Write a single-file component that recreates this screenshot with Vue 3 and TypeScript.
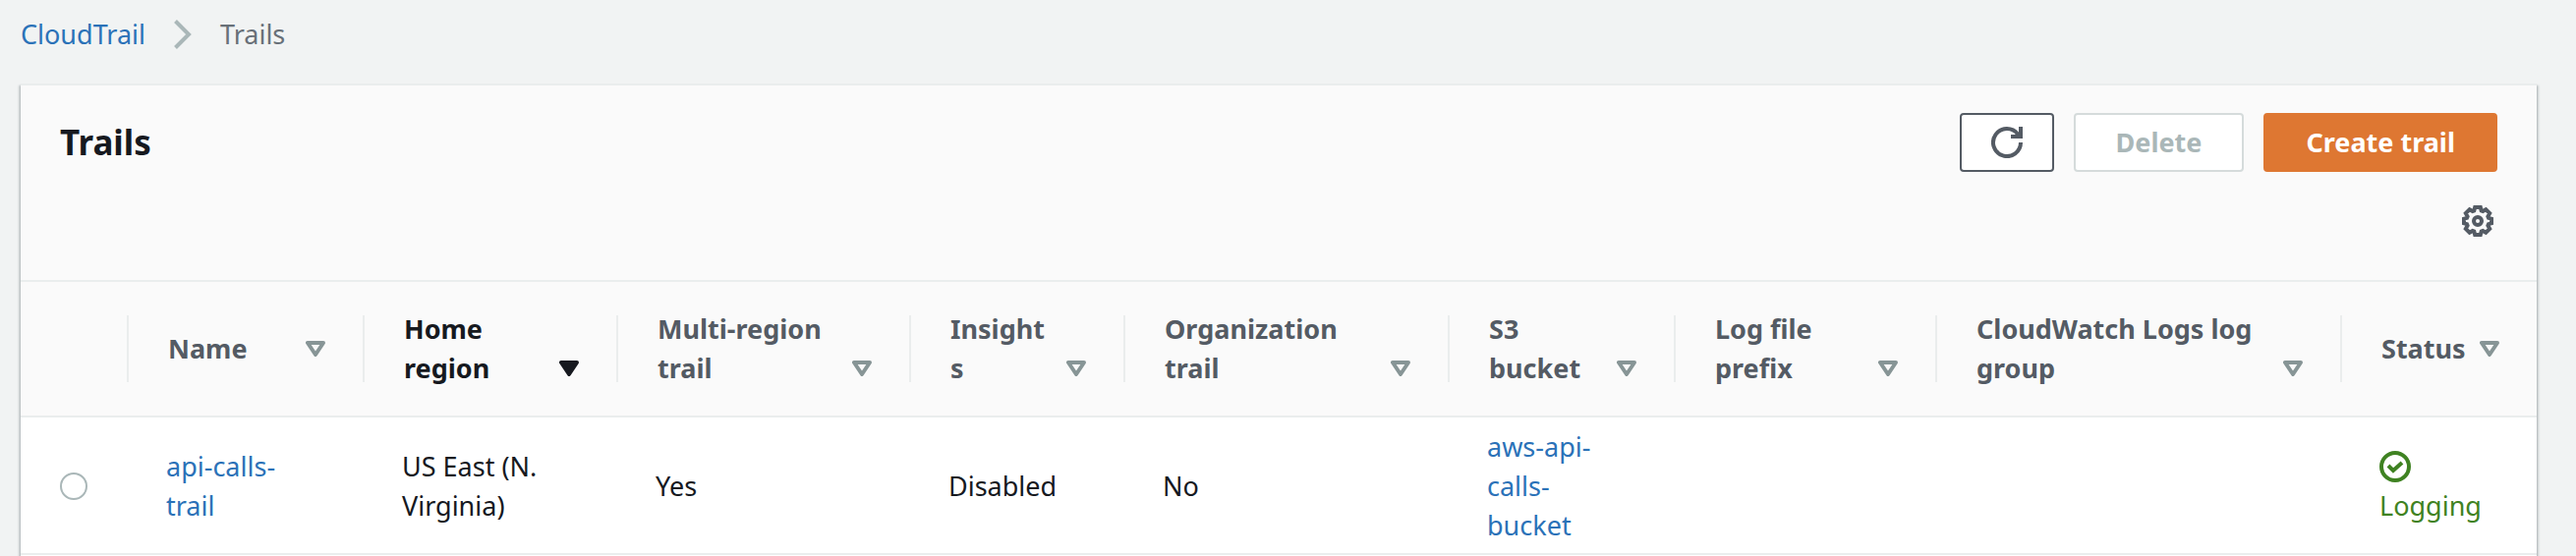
<script setup lang="ts">
import { computed, ref } from 'vue'

interface Column {
  key: string
  label: string
  weight: number
  sorted?: boolean
}

interface Trail {
  name: string
  region: string
  multiRegion: string
  insights: string
  organization: string
  bucket: string
  prefix: string
  logGroup: string
  status: string
}

const selectWeight = 110

const columns: Column[] = [
  { key: 'name', label: 'Name', weight: 240 },
  { key: 'region', label: 'Home region', weight: 258, sorted: true },
  { key: 'multiRegion', label: 'Multi-region trail', weight: 298 },
  { key: 'insights', label: 'Insights', weight: 218 },
  { key: 'organization', label: 'Organization trail', weight: 330 },
  { key: 'bucket', label: 'S3 bucket', weight: 230 },
  { key: 'prefix', label: 'Log file prefix', weight: 266 },
  { key: 'logGroup', label: 'CloudWatch Logs log group', weight: 412 },
  { key: 'status', label: 'Status', weight: 198 },
]

const trails: Trail[] = [
  {
    name: 'api-calls-trail',
    region: 'US East (N. Virginia)',
    multiRegion: 'Yes',
    insights: 'Disabled',
    organization: 'No',
    bucket: 'aws-api-calls-bucket',
    prefix: '',
    logGroup: '',
    status: 'Logging',
  },
]

const selected = ref('')

const widths = computed(() => {
  const all = [selectWeight, ...columns.map((c) => c.weight)]
  const total = all.reduce((sum, w) => sum + w, 0)
  return all.map((w) => `${(w / total) * 100}%`)
})
</script>

<template>
  <div class="page">
    <nav class="breadcrumb" aria-label="Breadcrumbs">
      <a href="#cloudtrail">CloudTrail</a>
      <svg class="chevron" viewBox="0 0 20 32" aria-hidden="true">
        <path d="M2.500 2.500 16 16 2.500 29.500" />
      </svg>
      <span>Trails</span>
    </nav>

    <main class="panel">
      <header class="panel-header">
        <div class="title-row">
          <h1>Trails</h1>
          <div class="actions">
            <button type="button" class="btn refresh" aria-label="Refresh">
              <svg viewBox="0 0 32 32" aria-hidden="true">
                <path d="M30 16A14 14 0 1 1 27 7.400L29 11" />
                <path d="M20 10h10V0" />
              </svg>
            </button>
            <button type="button" class="btn" disabled>Delete</button>
            <button type="button" class="btn primary">Create trail</button>
          </div>
        </div>
        <div class="settings-row">
          <button type="button" class="settings" aria-label="Preferences">
            <svg viewBox="0 0 32 32" aria-hidden="true">
              <path
                d="M13.200 2h5.600l.9 3.500 1.500.6 3.100-1.800 3.900 3.900-1.800 3.100.6 1.500 3 .9v4.600l-3 .9-.6 1.500 1.800 3.100-3.900 3.900-3.100-1.800-1.500.6-.9 3.500h-5.600l-.9-3.500-1.500-.6-3.100 1.800-3.900-3.900 1.800-3.100-.6-1.500-3-.9v-4.600l3-.9.6-1.500-1.800-3.100 3.900-3.900 3.100 1.800 1.500-.6z"
              />
              <circle cx="16" cy="16" r="4" />
            </svg>
          </button>
        </div>
      </header>

      <table>
        <colgroup>
          <col v-for="(width, i) in widths" :key="i" :style="{ width }" />
        </colgroup>
        <thead>
          <tr>
            <th scope="col" aria-label="Selection"></th>
            <th
              v-for="column in columns"
              :key="column.key"
              scope="col"
              :class="{ sorted: column.sorted }"
              :aria-sort="column.sorted ? 'descending' : 'none'"
            >
              <button type="button" class="sort">
                <span class="label">{{ column.label }}</span>
                <svg viewBox="0 0 20 16" aria-hidden="true">
                  <path d="M2 2h16l-8 12z" />
                </svg>
              </button>
            </th>
          </tr>
        </thead>
        <tbody>
          <tr v-for="trail in trails" :key="trail.name">
            <td class="select">
              <input
                v-model="selected"
                type="radio"
                name="trail"
                :value="trail.name"
                :aria-label="trail.name"
              />
            </td>
            <td><a href="#trail">{{ trail.name }}</a></td>
            <td>{{ trail.region }}</td>
            <td>{{ trail.multiRegion }}</td>
            <td>{{ trail.insights }}</td>
            <td>{{ trail.organization }}</td>
            <td><a href="#bucket">{{ trail.bucket }}</a></td>
            <td>{{ trail.prefix }}</td>
            <td>{{ trail.logGroup }}</td>
            <td>
              <div class="status">
                <span class="status-icon">
                  <svg viewBox="0 0 32 32" aria-hidden="true">
                    <circle cx="16" cy="16" r="14" />
                    <path d="M9 15l5 5 9-8" />
                  </svg>
                </span>
                <span>{{ trail.status }}</span>
              </div>
            </td>
          </tr>
        </tbody>
      </table>
    </main>
  </div>
</template>

<style>
body {
  margin: 0;
  background: #f1f3f3;
}
</style>

<style scoped>
.page {
  box-sizing: border-box;
  min-height: 100vh;
  display: flex;
  flex-direction: column;
  overflow: hidden;
  background: #f1f3f3;
  color: #16191f;
  font-family: 'Noto Sans', 'Open Sans', sans-serif;
  font-size: 27px;
  line-height: 40px;
}

a {
  color: #2b72b8;
  text-decoration: none;
}

button {
  font: inherit;
  cursor: pointer;
}

svg {
  display: block;
  flex: none;
  fill: none;
  stroke: currentColor;
}

.breadcrumb {
  display: flex;
  align-items: center;
  gap: 28px;
  padding: 15px 21px 30px;
  color: #687078;
}

.chevron {
  width: 20px;
  height: 32px;
  stroke: #aab7b8;
  stroke-width: 4;
}

.panel {
  flex: 1;
  margin: 0 40px 0 21px;
  border-top: 2px solid #eaeded;
  background: #fff;
  box-shadow:
    0 2px 2px 0 rgba(0, 28, 36, 0.3),
    2px 2px 2px 0 rgba(0, 28, 36, 0.15),
    -2px 2px 2px 0 rgba(0, 28, 36, 0.15);
}

.panel-header {
  padding: 28px 40px 44px;
  border-bottom: 2px solid #eaeded;
  background: #fafafa;
}

.title-row {
  display: flex;
  align-items: center;
  justify-content: space-between;
}

h1 {
  margin: 0;
  font-size: 35px;
  line-height: 44px;
  font-weight: 700;
}

.actions {
  display: flex;
  gap: 20px;
}

.btn {
  box-sizing: border-box;
  height: 60px;
  padding: 0 41px;
  border: 2px solid #545b64;
  border-radius: 4px;
  background: #fff;
  color: #545b64;
  font-weight: 700;
}

.btn:disabled {
  border-color: #d5dbdb;
  color: #aab7b8;
  cursor: default;
}

.btn.primary {
  border-color: #de7732;
  background: #de7732;
  color: #fff;
}

.btn.refresh {
  padding: 0 30px;
}

.refresh svg {
  width: 32px;
  height: 32px;
  stroke-width: 4;
}

.settings-row {
  display: flex;
  justify-content: flex-end;
  padding-top: 34px;
}

.settings {
  margin-right: 4px;
  padding: 0;
  border: 0;
  background: none;
  color: #545b64;
}

.settings svg {
  width: 32px;
  height: 32px;
  stroke-width: 4;
}

table {
  width: 100%;
  table-layout: fixed;
  border-collapse: separate;
  border-spacing: 0;
}

th {
  padding: 28px 40px;
  border-bottom: 2px solid #eaeded;
  background: linear-gradient(#eaeded, #eaeded) right center / 2px 50% no-repeat #fafafa;
  color: #545b64;
  text-align: left;
  vertical-align: middle;
}

th:last-child {
  padding-right: 38px;
  background: #fafafa;
}

th.sorted {
  color: #16191f;
}

.sort {
  display: flex;
  align-items: flex-end;
  justify-content: space-between;
  gap: 12px;
  width: 100%;
  padding: 0;
  border: 0;
  background: none;
  color: inherit;
  font-weight: 700;
  text-align: left;
}

.label {
  min-width: 0;
  overflow-wrap: anywhere;
}

.sort svg {
  width: 20px;
  height: 16px;
  margin-bottom: 12px;
  stroke: #879596;
  stroke-width: 4;
  stroke-linejoin: round;
}

.sorted .sort svg {
  fill: #16191f;
  stroke: #16191f;
}

td {
  padding: 10px 48px 8px 38px;
  border-bottom: 2px solid #eaeded;
  vertical-align: middle;
}

td.select {
  padding: 10px 40px 8px;
}

input[type='radio'] {
  appearance: none;
  display: block;
  box-sizing: border-box;
  width: 28px;
  height: 28px;
  margin: 0;
  border: 2px solid #aab7b8;
  border-radius: 50%;
  background: #fff;
}

input[type='radio']:checked {
  border: 8px solid #2b72b8;
}

.status {
  color: #3f8222;
}

.status-icon {
  display: flex;
  align-items: center;
  height: 40px;
}

.status svg {
  width: 32px;
  height: 32px;
  stroke-width: 4;
}
</style>
